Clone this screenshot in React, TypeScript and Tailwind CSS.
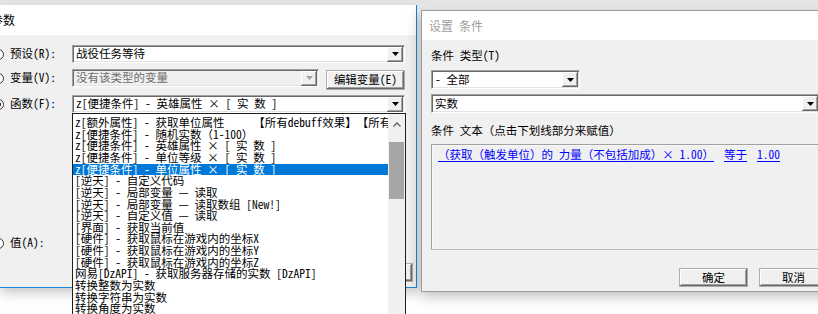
import type { ReactNode } from 'react'

const LIST_ITEMS = [
  'z[额外属性] - 获取单位属性　　 【所有debuff效果】　【所有buff效果】',
  'z[便捷条件] - 随机实数（1-100）',
  'z[便捷条件] - 英雄属性 × [ 实 数 ]',
  'z[便捷条件] - 单位等级 × [ 实 数 ]',
  'z[便捷条件] - 单位属性 × [ 实 数 ]',
  '[逆天] - 自定义代码',
  '[逆天] - 局部变量 — 读取',
  '[逆天] - 局部变量 — 读取数组 [New!]',
  '[逆天] - 自定义值 — 读取',
  '[界面] - 获取当前值',
  '[硬件] - 获取鼠标在游戏内的坐标X',
  '[硬件] - 获取鼠标在游戏内的坐标Y',
  '[硬件] - 获取鼠标在游戏内的坐标Z',
  '网易[DzAPI] - 获取服务器存储的实数 [DzAPI]',
  '转换整数为实数',
  '转换字符串为实数',
  '转换角度为实数',
]
const SELECTED = 4

function Arrow({ disabled }: { disabled?: boolean }) {
  return (
    <svg width="7" height="4" viewBox="0 0 7 4">
      <path d="M0 0 H7 L3.5 4 Z" fill={disabled ? '#a0a0a0' : '#000'} />
    </svg>
  )
}

// 콤보박스 (윈도우 클래식 스타일)
function Combo({ text, className, disabled }: { text: string; className: string; disabled?: boolean }) {
  return (
    <div
      className={`flex items-center shrink-0 border border-t-[#a0a0a0] border-l-[#a0a0a0] border-b-white border-r-white shadow-[inset_1px_1px_0_#696969,inset_-1px_-1px_0_#e3e3e3] ${disabled ? 'bg-[#f0f0f0] text-[#6d6d6d]' : 'bg-white'} ${className}`}
    >
      <span className="flex-1 min-w-0 pl-[3px] whitespace-pre">{text}</span>
      <div className="w-[16px] h-[15px] mr-[1px] flex items-center justify-center bg-[#f0f0f0] shadow-[inset_-1px_-1px_0_#696969,inset_1px_1px_0_#fff,inset_-2px_-2px_0_#a0a0a0]">
        <Arrow disabled={disabled} />
      </div>
    </div>
  )
}

function Button({ children, className }: { children?: ReactNode; className: string }) {
  return (
    <div
      className={`flex items-center justify-center shrink-0 bg-[#f0f0f0] border border-[#adadad] shadow-[inset_-1px_-1px_0_#696969,inset_1px_1px_0_#fff,inset_-2px_-2px_0_#a0a0a0] ${className}`}
    >
      {children}
    </div>
  )
}

function Radio({ checked }: { checked?: boolean }) {
  return (
    <div className="-ml-[7px] w-[11px] h-[11px] shrink-0 rounded-full border border-[#333] bg-white flex items-center justify-center">
      {checked && <div className="w-[5px] h-[5px] rounded-full bg-[#222]" />}
    </div>
  )
}

function Label({ text, checked }: { text: string; checked?: boolean }) {
  return (
    <div className="flex items-center h-[18px] shrink-0">
      <Radio checked={checked} />
      <span className="ml-[6px] w-[62px] whitespace-pre">{text}</span>
    </div>
  )
}

export default function App() {
  return (
    <div className="relative flex items-start w-[818px] h-[314px] overflow-hidden bg-[linear-gradient(to_bottom,#e6e6e6_0px,#f6f6f6_10px,#ffffff_10px)] font-[family-name:'Noto_Sans_Mono_CJK_SC','Noto_Sans_CJK_SC',monospace] text-[11.5px] leading-none text-black">
      {/* 왼쪽 대화상자 */}
      <div className="mt-[5px] w-[417px] h-[283px] shrink-0 flex flex-col border-r border-b border-[#1883d7] bg-[#f0f0f0] shadow-[0_4px_12px_rgba(0,0,0,0.25)]">
        <div className="h-[30px] shrink-0 bg-white flex items-center">
          <span className="-ml-[9px] text-[12px]">参数</span>
        </div>
        <div className="flex-1 flex flex-col pt-[10px]">
          <div className="flex items-start">
            <Label text="预设(R):" />
            <Combo text="战役任务等待" className="w-[333px] h-[18px]" />
          </div>
          <div className="mt-[6px] flex items-start h-[21px]">
            <Label text="变量(V):" />
            <Combo text="没有该类型的变量" className="w-[247px] h-[18px]" disabled />
            <Button className="ml-[7px] mt-[1px] w-[79px] h-[20px]">编辑变量(E)</Button>
          </div>
          <div className="mt-[5px] flex items-start">
            <Label text="函数(F):" checked />
            <Combo text="z[便捷条件] - 英雄属性 × [ 实 数 ]" className="w-[333px] h-[18px]" />
          </div>
          <div className="mt-[121px] flex items-start">
            <Label text="值(A):" />
          </div>
          <div className="mt-[11px] flex justify-end pr-[3px]">
            <Button className="w-[70px] h-[19px]" />
          </div>
        </div>
      </div>

      {/* 오른쪽 대화상자: 설정 조건 */}
      <div className="ml-[4px] mt-[10px] w-[420px] h-[282px] shrink-0 flex flex-col border border-[#9b9b9b] bg-[#f0f0f0] shadow-[0_3px_14px_rgba(0,0,0,0.3)]">
        <div className="h-[29px] shrink-0 bg-white flex items-center pl-[7px] text-[12px] text-[#9d9d9d]">设置 条件</div>
        <div className="flex flex-col pl-[9px] pt-[9px]">
          <div className="h-[14px] flex items-center">条件 类型(T)</div>
          <Combo text="- 全部" className="mt-[7px] w-[149px] h-[19px]" />
          <Combo text="实数" className="mt-[5px] w-[389px] h-[19px]" />
          <div className="mt-[11px] h-[14px] flex items-center">条件 文本（点击下划线部分来赋值）</div>
          <div className="mt-[6px] w-[389px] h-[106px] border border-[#a0a0a0] border-b-[#b8b8b8] shadow-[inset_1px_1px_0_#f8f8f8] pl-[6px] pt-[4px]">
            <div className="flex items-center h-[12px] text-[#0000ff] whitespace-pre">
              <span className="underline underline-offset-[2px]">（获取（触发单位）的 力量（不包括加成）× 1.00）</span>
              <span className="ml-[10px] underline underline-offset-[2px]">等于</span>
              <span className="ml-[10px] underline underline-offset-[2px]">1.00</span>
            </div>
          </div>
          <div className="mt-[18px] flex gap-[11px] pl-[248px]">
            <Button className="w-[69px] h-[19px]">确定</Button>
            <Button className="w-[69px] h-[19px]">取消</Button>
          </div>
        </div>
      </div>

      {/* 펼쳐진 드롭다운 목록 */}
      <div className="absolute left-[72px] top-[113px] w-[334px] h-[210px] flex border border-[#1e1e1e] bg-white">
        <div className="flex-1 min-w-0 overflow-hidden pt-[3px]">
          {LIST_ITEMS.map((item, i) => (
            <div
              key={i}
              className={`h-[11.65px] flex items-center pl-[2px] whitespace-pre ${i === SELECTED ? 'bg-[#0078d7] text-white' : ''}`}
            >
              {item}
            </div>
          ))}
        </div>
        <div className="w-[17px] shrink-0 flex flex-col bg-[#f0f0f0]">
          <div className="h-[17px] flex items-center justify-center pt-[3px]">
            <svg width="8" height="5" viewBox="0 0 8 5">
              <path d="M0.5 4.5 L4 1 L7.5 4.5" stroke="#606060" strokeWidth="1.3" fill="none" />
            </svg>
          </div>
          <div className="mt-[11px] mx-[1px] h-[57px] bg-[#a6a6a6]" />
        </div>
      </div>
    </div>
  )
}
